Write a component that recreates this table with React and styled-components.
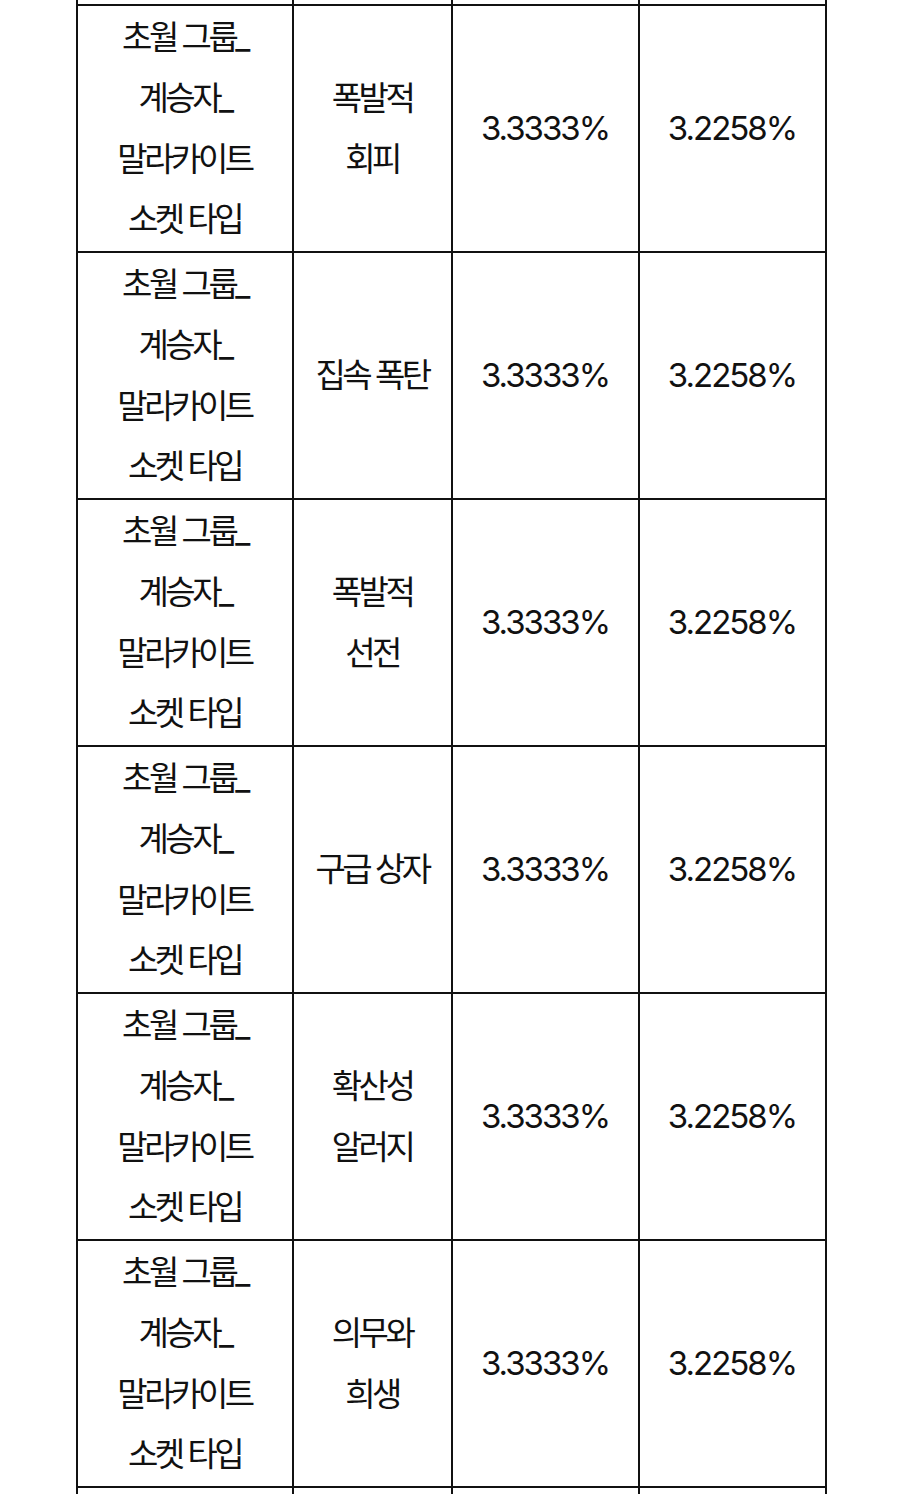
import React from "react";
import styled, { createGlobalStyle } from "styled-components";

const Global = createGlobalStyle`
  html, body { margin: 0; padding: 0; background: #fff; }
  body { overflow: hidden; }
`;

const Page = styled.div`
  width: 900px;
  height: 1494px;
  overflow: hidden;
  background: #fff;
  display: flex;
  justify-content: center;
`;

const Table = styled.table`
  margin-top: -243px;
  margin-left: 2px;
  border-collapse: collapse;
  table-layout: fixed;
  width: 749px;
  font-family: Inter, "Noto Sans CJK KR", sans-serif;
  color: #111;
`;

const Cell = styled.td`
  border: 2px solid #111;
  padding: 1px 0;
  text-align: center;
  vertical-align: middle;
  font-size: 33px;
  letter-spacing: ${(p) => (p.$num ? "-2px" : "-3.5px")};
  line-height: 60.75px;
  height: 243px;
`;

const Line = styled.div`
  white-space: nowrap;
`;

const rows = [
  ["폭발적", "회피"],
  ["폭발적", "회피"],
  ["집속 폭탄"],
  ["폭발적", "선전"],
  ["구급 상자"],
  ["확산성", "알러지"],
  ["의무와", "희생"],
  ["폭발적", "회피"],
];

const nameLines = ["초월 그룹_", "계승자_", "말라카이트", "소켓 타입"];

export default function App() {
  return (
    <>
      <Global />
      <Page>
        <Table>
          <colgroup>
            <col style={{ width: "216px" }} />
            <col style={{ width: "159px" }} />
            <col style={{ width: "187px" }} />
            <col style={{ width: "187px" }} />
          </colgroup>
          <tbody>
            {rows.map((skill, i) => (
              <tr key={i}>
                <Cell>
                  {nameLines.map((l) => (
                    <Line key={l}>{l}</Line>
                  ))}
                </Cell>
                <Cell>
                  {skill.map((l) => (
                    <Line key={l}>{l}</Line>
                  ))}
                </Cell>
                <Cell $num>3.3333%</Cell>
                <Cell $num>3.2258%</Cell>
              </tr>
            ))}
          </tbody>
        </Table>
      </Page>
    </>
  );
}
